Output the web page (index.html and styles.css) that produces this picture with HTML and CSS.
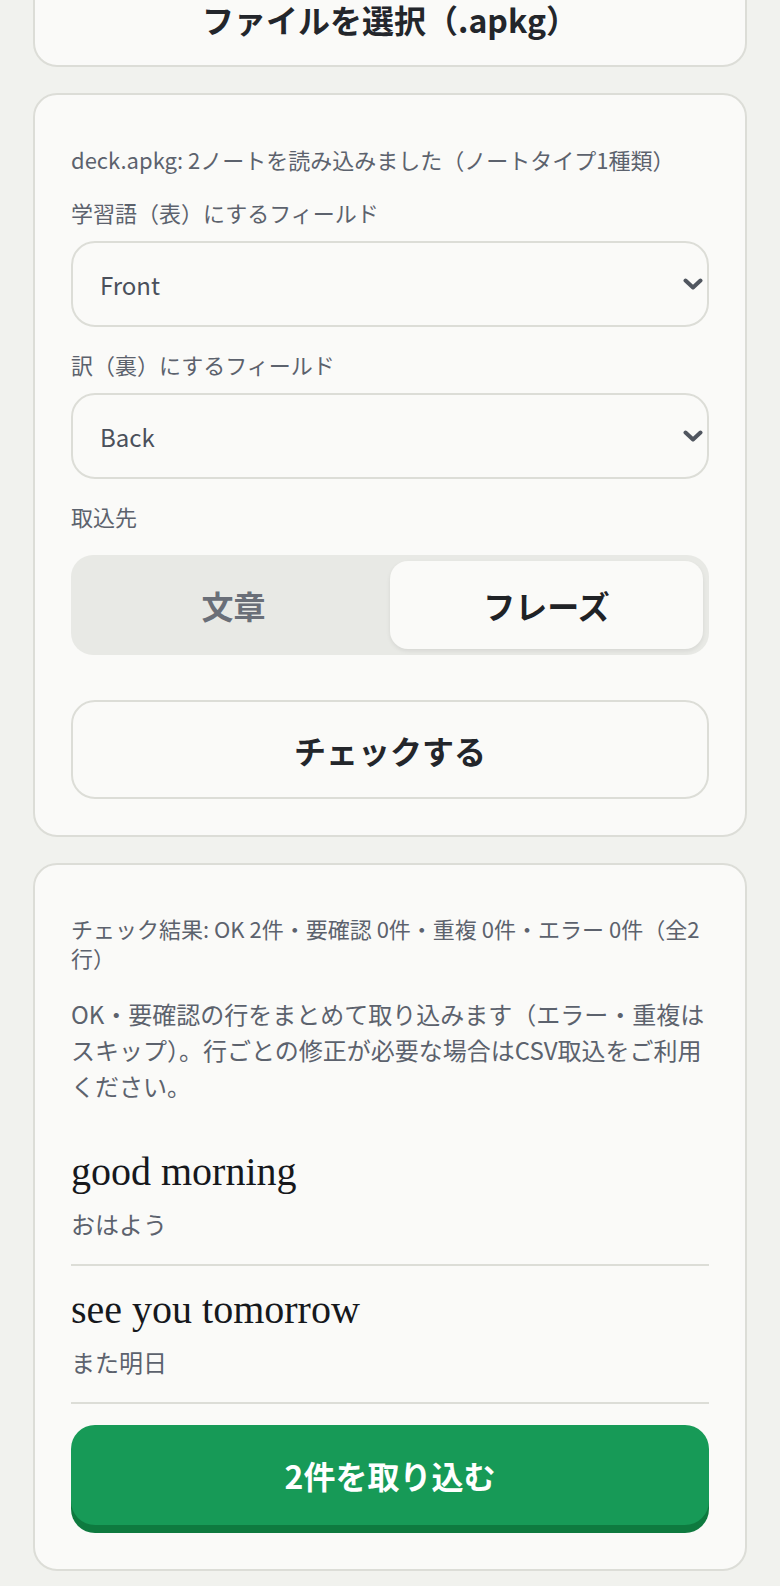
FILE: index.html
```html
<!DOCTYPE html>
<html lang="ja">
<head>
    <meta charset="UTF-8">
    <meta name="viewport" content="width=device-width, initial-scale=1.0">
    <title>Anki取込</title>
    <link rel="stylesheet" href="styles.css">
</head>
<body>
    <main class="page">
        <!-- File picker -->
        <section class="card card-file">
            <label class="file-pick">ファイルを選択（.apkg）<input type="file" accept=".apkg" hidden></label>
        </section>

        <!-- Field mapping -->
        <section class="card">
            <p class="note">deck.apkg: 2ノートを読み込みました（ノートタイプ1種類）</p>

            <label class="field-label" for="front-field">学習語（表）にするフィールド</label>
            <div class="select-wrap">
                <select id="front-field">
                    <option>Front</option>
                    <option>Back</option>
                </select>
                <svg class="chevron" viewBox="0 0 20 12"><path d="M2.5 2.5L10 9.5L17.5 2.5" /></svg>
            </div>

            <label class="field-label" for="back-field">訳（裏）にするフィールド</label>
            <div class="select-wrap">
                <select id="back-field">
                    <option>Back</option>
                    <option>Front</option>
                </select>
                <svg class="chevron" viewBox="0 0 20 12"><path d="M2.5 2.5L10 9.5L17.5 2.5" /></svg>
            </div>

            <div class="field-label field-label-wide">取込先</div>
            <div class="segment">
                <button type="button">文章</button>
                <button type="button" class="is-active">フレーズ</button>
            </div>

            <button type="button" class="check-btn">チェックする</button>
        </section>

        <!-- Check result -->
        <section class="card">
            <p class="note note-result">チェック結果: OK 2件・要確認 0件・重複 0件・エラー 0件（全2行）</p>
            <p class="desc">OK・要確認の行をまとめて取り込みます（エラー・重複はスキップ）。行ごとの修正が必要な場合はCSV取込をご利用ください。</p>

            <ul class="entries">
                <li class="entry">
                    <div class="word">good morning</div>
                    <div class="meaning">おはよう</div>
                </li>
                <li class="entry">
                    <div class="word">see you tomorrow</div>
                    <div class="meaning">また明日</div>
                </li>
            </ul>

            <button type="button" class="import-btn">2件を取り込む</button>
        </section>
    </main>
</body>
</html>
```

FILE: styles.css
```css
* {
    box-sizing: border-box;
}
body {
    margin: 0;
    background-color: #f1f2ee;
    font-family: "Noto Sans CJK JP", "Noto Sans", sans-serif;
    color: #23262b;
}
.page {
    display: flex;
    flex-direction: column;
    gap: 26px;
    padding: 0 33px 18px;
}
.card {
    background-color: #fafaf8;
    border: 2px solid #dcddd7;
    border-radius: 24px;
    padding: 36px;
}
.card-file {
    margin-top: -60px;
    padding-top: 58px;
    padding-bottom: 27px;
    text-align: center;
}
.file-pick {
    display: block;
    font-size: 32px;
    font-weight: 700;
    line-height: 38px;
    cursor: pointer;
}
.note {
    margin: 13px 0 23px;
    font-size: 22px;
    line-height: 30px;
    color: #5c626d;
}
.note-result {
    line-height: 29px;
    margin-bottom: 24px;
}
.field-label {
    display: block;
    font-size: 22px;
    line-height: 30px;
    color: #5c626d;
    margin-bottom: 14px;
}
.field-label-wide {
    margin-bottom: 24px;
}
.select-wrap {
    position: relative;
    margin-bottom: 22px;
}
.select-wrap select {
    appearance: none;
    -webkit-appearance: none;
    width: 100%;
    height: 86px;
    padding: 0 40px 0 27px;
    border: 2px solid #dcddd7;
    border-radius: 24px;
    background-color: #fafaf8;
    font-family: inherit;
    font-size: 24px;
    color: #4a505b;
}
.chevron {
    position: absolute;
    right: 6px;
    top: 50%;
    width: 20px;
    height: 12px;
    transform: translateY(-50%);
    pointer-events: none;
}
.chevron path {
    fill: none;
    stroke: #50565f;
    stroke-width: 4;
    stroke-linecap: round;
    stroke-linejoin: round;
}
.segment {
    display: grid;
    grid-template-columns: 1fr 1fr;
    height: 100px;
    padding: 6px;
    margin-bottom: 45px;
    background-color: #e8e9e5;
    border-radius: 22px;
}
.segment button {
    border: none;
    border-radius: 18px;
    background: transparent;
    font-family: inherit;
    font-size: 32px;
    font-weight: 700;
    color: #6a6f78;
    cursor: pointer;
}
.segment button.is-active {
    background-color: #fafaf8;
    color: #1f2226;
    box-shadow: 0 2px 4px rgba(0, 0, 0, 0.08);
}
.check-btn {
    display: block;
    width: 100%;
    height: 99px;
    border: 2px solid #dcddd7;
    border-radius: 24px;
    background-color: #fafaf8;
    font-family: inherit;
    font-size: 32px;
    font-weight: 700;
    color: #23262b;
    cursor: pointer;
}
.desc {
    margin: 0;
    font-size: 24px;
    line-height: 36px;
    color: #5c626d;
}
.entries {
    list-style: none;
    margin: 24px 0 0;
    padding: 0;
}
.entry {
    padding: 20px 0 22px;
    border-bottom: 2px solid #dcddd7;
}
.word {
    font-family: "Liberation Serif", serif;
    font-size: 40px;
    line-height: 48px;
    color: #16181c;
}
.meaning {
    margin-top: 10px;
    font-size: 24px;
    line-height: 36px;
    color: #5c626d;
}
.import-btn {
    display: block;
    width: 100%;
    height: 100px;
    margin: 21px 0 8px;
    border: none;
    border-radius: 24px;
    background-color: #179a57;
    box-shadow: 0 8px 0 #0e7a3f;
    font-family: inherit;
    font-size: 32px;
    font-weight: 700;
    color: #fff;
    cursor: pointer;
}
```
